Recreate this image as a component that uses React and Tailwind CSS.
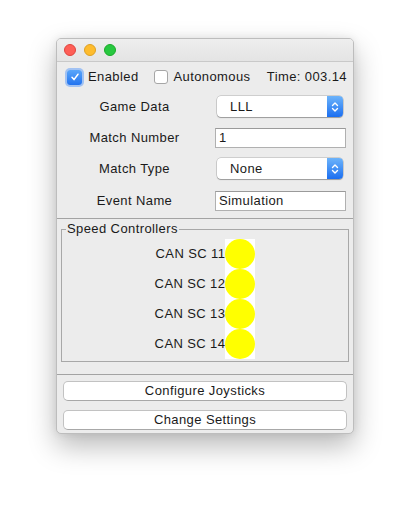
import React from "react";

const font = { fontFamily: '"Liberation Sans", Arial, sans-serif' };

function Combo({ value }) {
  return (
    <div className="ml-[5px] flex h-[21px] w-[126px] items-stretch rounded-[4px] bg-white shadow-[0_0_0_0.5px_rgba(0,0,0,0.25),0_1px_1px_rgba(0,0,0,0.25)]">
      <div className="flex flex-1 items-center pl-[13px] text-[13px] text-[#1a1a1a]">{value}</div>
      <div className="flex w-[16px] items-center justify-center rounded-r-[4px] bg-gradient-to-b from-[#6cb3fa] to-[#1a6ef0]">
        <svg width="8" height="12" viewBox="0 0 8 12" fill="none" stroke="white" strokeWidth="1.4" strokeLinecap="round" strokeLinejoin="round">
          <path d="M1.5 4.5 L4 2 L6.5 4.5" />
          <path d="M1.5 7.5 L4 10 L6.5 7.5" />
        </svg>
      </div>
    </div>
  );
}

function Field({ value }) {
  return (
    <div className="ml-[3px] flex h-[20px] w-[131px] items-center border border-[#b0b0b0] border-t-[#9a9a9a] bg-white pl-[3px] text-[13px] text-[#1a1a1a]">
      {value}
    </div>
  );
}

function Row({ label, children, className }) {
  return (
    <div className={"grid grid-cols-[155px_1fr] items-center " + className}>
      <div className="text-center text-[13px] text-[#1a1a1a]">{label}</div>
      <div className="flex items-center">{children}</div>
    </div>
  );
}

export default function App() {
  const scs = ["CAN SC 11", "CAN SC 12", "CAN SC 13", "CAN SC 14"];
  return (
    <div className="h-[509px] w-[410px] bg-white pl-[56px] pt-[38px] tracking-[0.4px]" style={font}>
      <div className="flex h-[396px] w-[298px] flex-col overflow-hidden rounded-[5px] border border-[#bdbdbd] bg-[#ececec] shadow-[0_12px_28px_rgba(0,0,0,0.28),0_0_8px_rgba(0,0,0,0.08)]">
        {/* title bar */}
        <div className="flex h-[23px] items-center gap-[8px] border-b border-[#c9c9c9] bg-gradient-to-b from-[#eeeeee] to-[#e4e4e4] pl-[7px]">
          <div className="h-[12px] w-[12px] rounded-full border border-[#e0443e] bg-[#fe5f57]" />
          <div className="h-[12px] w-[12px] rounded-full border border-[#dea123] bg-[#febc2e]" />
          <div className="h-[12px] w-[12px] rounded-full border border-[#1aab29] bg-[#28c840]" />
        </div>

        {/* top panel */}
        <div className="flex flex-col pb-[7px]">
          <div className="mt-[5px] flex h-[20px] items-center pl-[10px] text-[13px] text-[#1a1a1a]">
            <div className="flex h-[15px] w-[15px] items-center justify-center rounded-[3px] bg-gradient-to-b from-[#5aa6fa] to-[#2273ef] shadow-[0_0_0_2px_rgba(100,160,250,0.55)]">
              <svg width="10" height="10" viewBox="0 0 10 10" fill="none" stroke="white" strokeWidth="1.5" strokeLinecap="round" strokeLinejoin="round">
                <path d="M2 5.3 L4 7.6 L8 2.2" />
              </svg>
            </div>
            <span className="ml-[6px]">Enabled</span>
            <div className="ml-[15px] h-[14px] w-[14px] rounded-[3px] border border-[#a6a6a6] bg-white" />
            <span className="ml-[6px]">Autonomous</span>
            <span className="ml-auto mr-[6px]">Time: 003.14</span>
          </div>

          <Row label="Game Data" className="mt-[9px] h-[21px]">
            <Combo value="LLL" />
          </Row>
          <Row label="Match Number" className="mt-[11px] h-[20px]">
            <Field value="1" />
          </Row>
          <Row label="Match Type" className="mt-[10px] h-[21px]">
            <Combo value="None" />
          </Row>
          <Row label="Event Name" className="mt-[12px] h-[20px]">
            <Field value="Simulation" />
          </Row>
        </div>

        {/* speed controllers */}
        <div className="border-y border-[#a3a3a3] px-[4px] pb-[12px] pt-[3px]">
          <div className="relative mt-[7px] border border-[#a8a8a8] pb-[2px] pt-[9px]">
            <div className="absolute left-[4px] top-[-9px] bg-[#ececec] px-[1px] text-[13px] leading-[16px] text-[#1a1a1a]">
              Speed Controllers
            </div>
            <div className="flex justify-center">
              <div className="grid grid-cols-[auto_30px]">
                {scs.map((s) => (
                  <React.Fragment key={s}>
                    <div className="flex h-[30px] items-center justify-end text-[13px] text-[#1a1a1a]">{s}</div>
                    <div className="flex h-[30px] w-[30px] items-center justify-center bg-white">
                      <div className="h-[30px] w-[30px] rounded-full bg-[#ffff00]" />
                    </div>
                  </React.Fragment>
                ))}
              </div>
            </div>
          </div>
        </div>

        {/* buttons */}
        <div className="flex flex-col gap-[9px] px-[6px] pt-[6px]">
          <div className="flex h-[20px] items-center justify-center rounded-[5px] border border-[#c2c2c2] border-b-[#a8a8a8] bg-white text-[13px] text-[#1a1a1a]">
            Configure Joysticks
          </div>
          <div className="flex h-[20px] items-center justify-center rounded-[5px] border border-[#c2c2c2] border-b-[#a8a8a8] bg-white text-[13px] text-[#1a1a1a]">
            Change Settings
          </div>
        </div>
      </div>
    </div>
  );
}
